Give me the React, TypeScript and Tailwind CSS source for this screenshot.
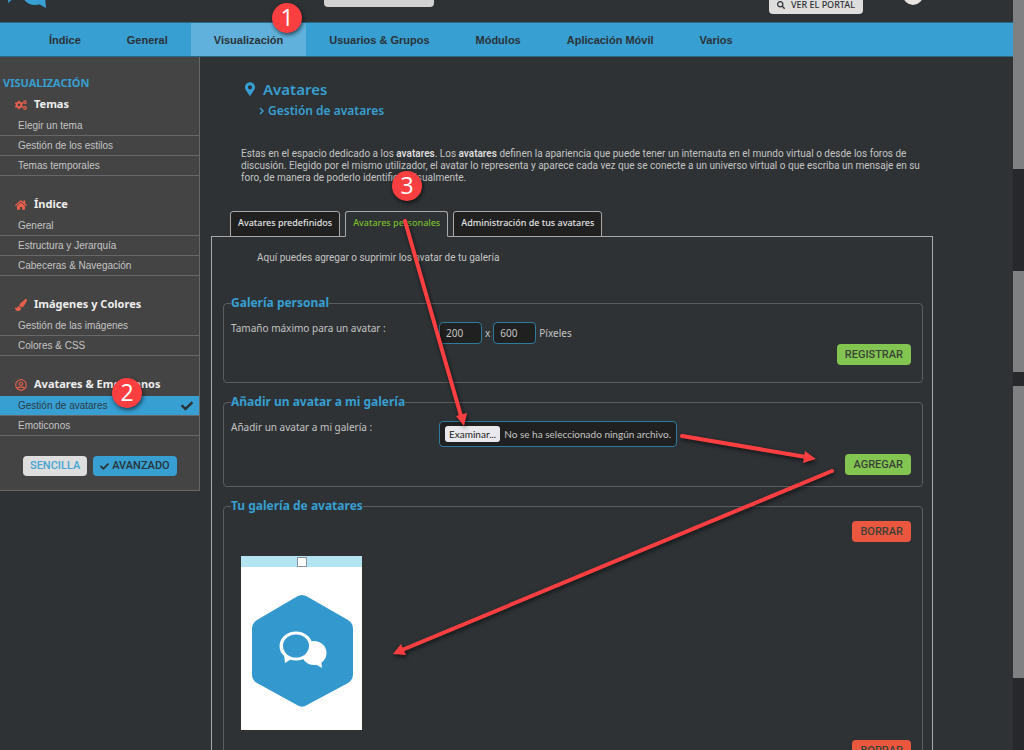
import type { ReactNode } from "react";
import type { IconType } from "react-icons";
import {
  FaCheck,
  FaCogs,
  FaHome,
  FaMapMarkerAlt,
  FaPaintBrush,
  FaRegUserCircle,
  FaSearch,
} from "react-icons/fa";

type Group = { title: string; icon: IconType; items: string[] };

const NAV = ["Índice", "General", "Visualización", "Usuarios & Grupos", "Módulos", "Aplicación Móvil", "Varios"];

const GROUPS: Group[] = [
  { title: "Temas", icon: FaCogs, items: ["Elegir un tema", "Gestión de los estilos", "Temas temporales"] },
  { title: "Índice", icon: FaHome, items: ["General", "Estructura y Jerarquía", "Cabeceras & Navegación"] },
  { title: "Imágenes y Colores", icon: FaPaintBrush, items: ["Gestión de las imágenes", "Colores & CSS"] },
  { title: "Avatares & Emoticonos", icon: FaRegUserCircle, items: ["Gestión de avatares", "Emoticonos"] },
];

const TABS = ["Avatares predefinidos", "Avatares personales", "Administración de tus avatares"];

function Header() {
  return (
    <header className="flex h-[22px] items-end overflow-hidden pl-2">
      <a href="#inicio" aria-label="Inicio" className="mb-3.5 block">
        <svg width="40" height="30" viewBox="0 0 40 30" fill="#379fd1">
          <path d="M1 14 L0 25 L6 20 Z" />
          <ellipse cx="27" cy="15" rx="13" ry="12" />
          <path d="M29 25 L38 30 L37 19 Z" />
        </svg>
      </a>
      <input
        type="search"
        aria-label="Búsqueda"
        className="mb-[15px] ml-[276px] h-6 w-[110px] rounded-sm bg-[#d2d2d2]"
      />
      <button
        type="button"
        className="mb-2 ml-auto flex h-[22px] items-center gap-1.5 rounded-sm bg-[#dedede] px-2 pt-1 text-[9px] font-medium whitespace-nowrap text-[#2d3033]"
      >
        <FaSearch size={8} />
        VER EL PORTAL
      </button>
      <span className="mr-[90px] mb-[17px] ml-10 size-5 rounded-full bg-[#e8e4e2]" />
    </header>
  );
}

function Nav() {
  return (
    <nav className="flex h-[35px] border-y border-[#2b6883] bg-[#379fd1] pl-[26px] font-['Liberation_Sans',Arial,sans-serif] text-[11px] font-bold text-[#2b3136]">
      {NAV.map((label) => (
        <a
          key={label}
          href="#menu"
          className={`flex items-center px-[23px] pt-0.5 whitespace-nowrap ${label === "Visualización" ? "bg-[#60b2dc]" : ""}`}
        >
          {label}
        </a>
      ))}
    </nav>
  );
}

function Sidebar() {
  return (
    <aside className="w-[200px] shrink-0 self-start border-r border-b border-[#686868] bg-[#444444] pt-4 pb-3.5">
      <h2 className="pl-[3px] text-[11px] leading-5 font-bold text-[#379fd1]">VISUALIZACIÓN</h2>
      <div className="flex flex-col gap-[17px]">
        {GROUPS.map(({ title, icon: Icon, items }) => (
          <section key={title}>
            <h3 className="flex h-[23px] items-center gap-[7px] pl-[15px] text-[11px] font-bold text-[#eeeeee]">
              <Icon size={12} className="text-[#e8604c]" />
              {title}
            </h3>
            <ul className="font-['Liberation_Sans',Arial,sans-serif] text-[10px]">
              {items.map((item) => {
                const active = item === "Gestión de avatares";
                return (
                  <li key={item}>
                    <a
                      href="#seccion"
                      className={`flex h-5 items-center justify-between border-b border-[#686868] pr-1.5 pl-[18px] ${active ? "bg-[#379fd1] text-[#2b3c48]" : "text-[#c4c4c4]"}`}
                    >
                      {item}
                      {active && <FaCheck size={12} className="text-[#2b3136]" />}
                    </a>
                  </li>
                );
              })}
            </ul>
          </section>
        ))}
      </div>
      <div className="mt-5 flex gap-1.5 pl-[23px] font-[Roboto,sans-serif] text-[11px] font-medium">
        <button type="button" className="h-5 rounded-sm bg-[#dedede] px-[7px] text-[#45a5d3]">
          SENCILLA
        </button>
        <button type="button" className="flex h-5 items-center gap-[3px] rounded-sm bg-[#379fd1] px-[7px] text-[#2b3136]">
          <FaCheck size={9} />
          AVANZADO
        </button>
      </div>
    </aside>
  );
}

function Panel({ title, className, children }: { title: string; className: string; children: ReactNode }) {
  return (
    <fieldset className={`rounded-sm border border-[#5b5d5f] px-[7px] ${className}`}>
      <legend className="text-[12px] leading-4 font-bold text-[#379fd1]">{title}</legend>
      {children}
    </fieldset>
  );
}

function Action({ tone, children }: { tone: "green" | "red"; children: ReactNode }) {
  return (
    <button
      type="button"
      className={`h-[21px] rounded-sm px-2 pt-0.5 font-[Roboto,sans-serif] text-[11px] font-medium text-[#3a4238] ${tone === "green" ? "bg-[#82c651]" : "bg-[#eb563e]"}`}
    >
      {children}
    </button>
  );
}

function AvatarCard() {
  return (
    <label className="ml-2.5 block h-[174px] w-[121px] bg-white">
      <span className="flex h-[11px] items-center justify-center bg-[#b3e4f1]">
        <input
          type="checkbox"
          aria-label="Seleccionar avatar"
          className="size-2.5 appearance-none border border-[#8f8f9d] bg-white checked:bg-[#379fd1]"
        />
      </span>
      <svg width="121" height="162" viewBox="0 0 121 162" role="img" aria-label="Avatar">
        <path
          d="M56 29.500 Q61 26.500 66 29.500 L107 53 Q112 56 112 62 V107 Q112 113 107 116 L66 138 Q61 141.500 56 138 L16 116 Q11 113 11 107 V62 Q11 56 16 53 Z"
          fill="#3398cd"
        />
        <ellipse cx="73" cy="86" rx="12.500" ry="12" fill="#fff" />
        <path d="M74 97 L81 101 L80 92 Z" fill="#fff" />
        <ellipse cx="55" cy="79" rx="16.500" ry="14.500" fill="#fff" />
        <path d="M43 87 L44 96 L52 91 Z" fill="#fff" />
        <ellipse cx="55" cy="79" rx="13" ry="11.500" fill="#3398cd" />
      </svg>
    </label>
  );
}

function Content() {
  return (
    <main className="min-w-0 flex-1 pt-6 pr-[80px] pl-[11px]">
      <h1 className="flex items-center gap-2 pl-[34px] text-[15px] leading-4 font-semibold text-[#379fd1]">
        <FaMapMarkerAlt size={14} className="w-2.5" />
        Avatares
      </h1>
      <h2 className="mt-1.5 flex items-center gap-1 pl-12 text-[12px] leading-4 font-semibold text-[#379fd1]">
        <svg width="5" height="8" viewBox="0 0 5 8" fill="none" stroke="currentColor" strokeWidth="1.500">
          <path d="M1 1 L4 4 L1 7" />
        </svg>
        Gestión de avatares
      </h2>
      <p className="mt-[29px] pl-[30px] font-[Roboto,sans-serif] text-[10px] leading-3 whitespace-nowrap">
        Estas en el espacio dedicado a los <b className="font-semibold text-[#dddddd]">avatares</b>. Los{" "}
        <b className="font-semibold text-[#dddddd]">avatares</b> definen la apariencia que puede tener un internauta en
        el mundo virtual o desde los foros de
        <br />
        discusión. Elegido por el mismo utilizador, el avatar lo representa y aparece cada vez que se conecte a un
        universo virtual o que escriba un mensaje en su
        <br />
        foro, de manera de poderlo identificar visualmente.
      </p>

      <div role="tablist" className="mt-[27px] flex gap-[5px] pl-[19px]">
        {TABS.map((label) => {
          const active = label === "Avatares personales";
          return (
            <button
              key={label}
              type="button"
              role="tab"
              aria-selected={active}
              className={`-mb-px h-[26px] rounded-t-[3px] border border-[#a9a9a9] px-[7px] pb-0.5 text-[9px] font-medium ${active ? "border-b-[#2e3235] bg-[#2e3235] text-[#7cbb2e]" : "bg-[#202020] text-[#e2e2e2]"}`}
            >
              {label}
            </button>
          );
        })}
      </div>

      <div className="border border-[#a9a9a9] pt-[13px] pr-[9px] pl-[11px]">
        <p className="pl-[34px] font-[Roboto,sans-serif] text-[10px] leading-4">
          Aquí puedes agregar o suprimir los avatar de tu galería
        </p>

        <Panel title="Galería personal" className="mt-[29px] h-[88px]">
          <div className="mt-[11px] flex text-[10px]">
            <label htmlFor="ancho" className="w-[208px] leading-3">
              Tamaño máximo para un avatar :
            </label>
            <div className="flex items-center gap-[3px]">
              <input id="ancho" defaultValue="200" className="h-[22px] w-[43px] rounded-sm border border-[#2f7b9d] bg-[#202020] px-1.5" />
              x
              <input
                aria-label="Alto máximo"
                defaultValue="600"
                className="h-[22px] w-[43px] rounded-sm border border-[#2f7b9d] bg-[#202020] px-1.5"
              />
              Píxeles
            </div>
          </div>
          <div className="flex justify-end pr-1">
            <Action tone="green">REGISTRAR</Action>
          </div>
        </Panel>

        <Panel title="Añadir un avatar a mi galería" className="mt-[11px] h-[93px]">
          <div className="mt-[11px] flex text-[10px]">
            <span className="w-[208px] leading-3">Añadir un avatar a mi galería :</span>
            <input id="archivo" type="file" className="sr-only" />
            <label
              htmlFor="archivo"
              className="flex h-[26px] items-center gap-1 rounded-sm border border-[#2f7b9d] bg-[#202020] px-[5px] font-[Lato,sans-serif]"
            >
              <span className="rounded-[3px] bg-[#e9e9ed] px-1 leading-4 text-[#202020]">Examinar...</span>
              No se ha seleccionado ningún archivo.
            </label>
          </div>
          <div className="mt-[7px] flex justify-end pr-1">
            <Action tone="green">AGREGAR</Action>
          </div>
        </Panel>

        <Panel title="Tu galería de avatares" className="mt-[11px] h-[300px]">
          <div className="mt-[7px] flex justify-end pr-1">
            <Action tone="red">BORRAR</Action>
          </div>
          <div className="mt-3.5">
            <AvatarCard />
          </div>
          <div className="mt-2.5 flex justify-end pr-1">
            <Action tone="red">BORRAR</Action>
          </div>
        </Panel>
      </div>
    </main>
  );
}

function ScrollRail() {
  return (
    <div aria-hidden="true" className="flex w-[11px] shrink-0 flex-col bg-[#26282c]">
      <div className="h-[169px] bg-[#7f8081]" />
      <div className="mt-[102px] h-[101px] bg-[#7f8081]" />
      <div className="mt-3.5 h-[292px] bg-[#7f8081]" />
    </div>
  );
}

function Step({ n, className }: { n: number; className: string }) {
  return (
    <span
      className={`absolute flex size-[30px] items-center justify-center rounded-full bg-[#fb3f41] pb-0.5 font-['Open_Sans',sans-serif] text-[23px] leading-none text-white shadow-[1px_2px_4px_rgba(0,0,0,0.6)] ${className}`}
    >
      {n}
    </span>
  );
}

function Annotations() {
  return (
    <div className="pointer-events-none absolute inset-0">
      <svg width="1024" height="750" viewBox="0 0 1024 750" className="drop-shadow-[1px_2px_2px_rgba(0,0,0,0.6)]">
        <g stroke="#fb3f41" strokeWidth="4" strokeLinecap="round" fill="#fb3f41">
          <path d="M405 221 L461 416" />
          <path d="M682 436 L806 457" />
          <path d="M832 471 L402 650" />
          <g stroke="none">
            <path d="M464 426 L456 416 L467 413 Z" />
            <path d="M816 459 L803 463 L805 451 Z" />
            <path d="M393 654 L401 644 L406 655 Z" />
          </g>
        </g>
      </svg>
      <Step n={1} className="top-[3px] left-[272px]" />
      <Step n={2} className="top-[378px] left-[112px]" />
      <Step n={3} className="top-[171px] left-[392px]" />
    </div>
  );
}

export default function App() {
  return (
    <div className="relative flex h-screen overflow-hidden bg-[#2e3235] font-['Noto_Sans',sans-serif] text-[#c4c4c4]">
      <div className="min-w-0 flex-1">
        <Header />
        <Nav />
        <div className="flex">
          <Sidebar />
          <Content />
        </div>
      </div>
      <ScrollRail />
      <Annotations />
    </div>
  );
}
